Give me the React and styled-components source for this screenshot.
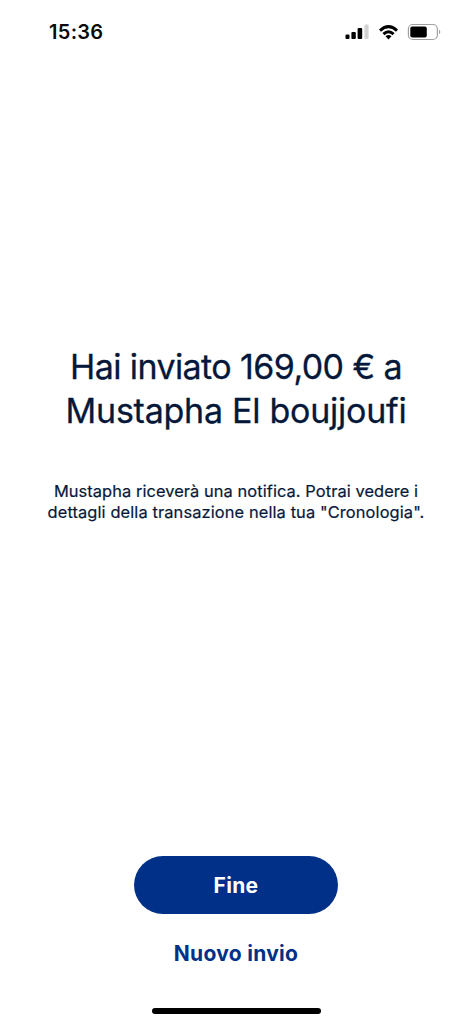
import React from 'react'
import styled, { createGlobalStyle } from "styled-components";

const GlobalStyle = createGlobalStyle`
    body {
        margin: 0;
        background: #ffffff;
        font-family: Inter, "Liberation Sans", sans-serif;
    }
`;

const Screen = styled.div`
    width: 472px;
    height: 1024px;
    display: flex;
    flex-direction: column;
    align-items: center;
    box-sizing: border-box;
    overflow: hidden;
`;

const StatusBar = styled.header`
    width: 100%;
    height: 64px;
    display: flex;
    align-items: center;
    justify-content: space-between;
    padding: 0px 31px 0px 49px;
    box-sizing: border-box;
`;

const Time = styled.time`
    color: #0a0a0a;
    font-size: 20px;
    font-weight: 600;
    letter-spacing: 0.3px;
`;

const StatusIcons = styled.svg`
    width: 98px;
    height: 20px;
    display: block;
`;

const Message = styled.main`
    padding-top: 281px;
    flex: 1;
    text-align: center;
    color: #06183a;
`;

const Title = styled.h1`
    margin: 0;
    font-size: 34px;
    font-weight: 400;
    line-height: 43.7px;
    -webkit-text-stroke: 0.3px #06183a;
`;

const Line = styled.span`
    display: block;
    white-space: nowrap;
    letter-spacing: ${props => props.$spacing};
`;

const Description = styled.p`
    margin: 49px 0px 0px;
    font-size: 16.4px;
    font-weight: 400;
    line-height: 20.5px;
    -webkit-text-stroke: 0.2px #06183a;
`;

const Actions = styled.footer`
    display: flex;
    flex-direction: column;
    align-items: center;
`;

const Button = styled.button`
    border: none;
    padding: 0px;
    font-family: inherit;
    font-size: 21px;
    font-weight: 700;
    cursor: pointer;
`;

const PrimaryButton = styled(Button)`
    width: 204px;
    height: 58px;
    border-radius: 29px;
    background: #003087;
    color: #ffffff;
    letter-spacing: 0.3px;
`;

const LinkButton = styled(Button)`
    height: 40px;
    margin-top: 19px;
    background: none;
    color: #003087;
    letter-spacing: 0.3px;
`;

const HomeIndicator = styled.div`
    width: 169px;
    height: 6px;
    margin: 35px 0px 10px;
    border-radius: 3px;
    background: #000000;
`;

function App() {
    return (
        <Screen>
            <GlobalStyle />
            <StatusBar>
                <Time>15:36</Time>
                <StatusIcons viewBox="0 0 98 20" fill="none">
                    {/* signal */}
                    <rect x="2.5" y="12.5" width="4" height="4.5" rx="1" fill="#000" />
                    <rect x="8.4" y="10" width="4.4" height="7" rx="1" fill="#000" />
                    <rect x="14.6" y="6" width="4.6" height="11" rx="1" fill="#000" />
                    <rect x="21.4" y="2.5" width="4.2" height="14.5" rx="1.2" fill="#d2d2d2" />
                    {/* wifi */}
                    <path d="M36 7.5 Q45.5 -1.3 55 7.5 L53 9.7 Q45.5 2.9 38 9.7 Z" fill="#000" />
                    <path d="M39.4 11 Q45.5 5.4 51.6 11 L49.5 13.2 Q45.5 9.5 41.5 13.2 Z" fill="#000" />
                    <path d="M42.5 14.3 Q45.5 11.8 48.5 14.3 L45.5 17.4 Z" fill="#000" />
                    {/* battery */}
                    <rect x="65.4" y="2.5" width="29" height="15" rx="4.5" stroke="#a0a0a0" strokeWidth="1.2" />
                    <rect x="67.3" y="4.5" width="16.5" height="11" rx="2" fill="#000" />
                    <path d="M96 7.6 Q98.6 10 96 12.4 Z" fill="#a0a0a0" />
                </StatusIcons>
            </StatusBar>

            <Message>
                <Title>
                    <Line $spacing="-0.6px">Hai inviato 169,00 € a</Line>
                    <Line $spacing="-0.25px">Mustapha El boujjoufi</Line>
                </Title>
                <Description>
                    <Line $spacing="0.08px">Mustapha riceverà una notifica. Potrai vedere i</Line>
                    <Line $spacing="0.12px">dettagli della transazione nella tua "Cronologia".</Line>
                </Description>
            </Message>

            <Actions>
                <PrimaryButton>Fine</PrimaryButton>
                <LinkButton>Nuovo invio</LinkButton>
                <HomeIndicator />
            </Actions>
        </Screen>
    )
}

export default App
